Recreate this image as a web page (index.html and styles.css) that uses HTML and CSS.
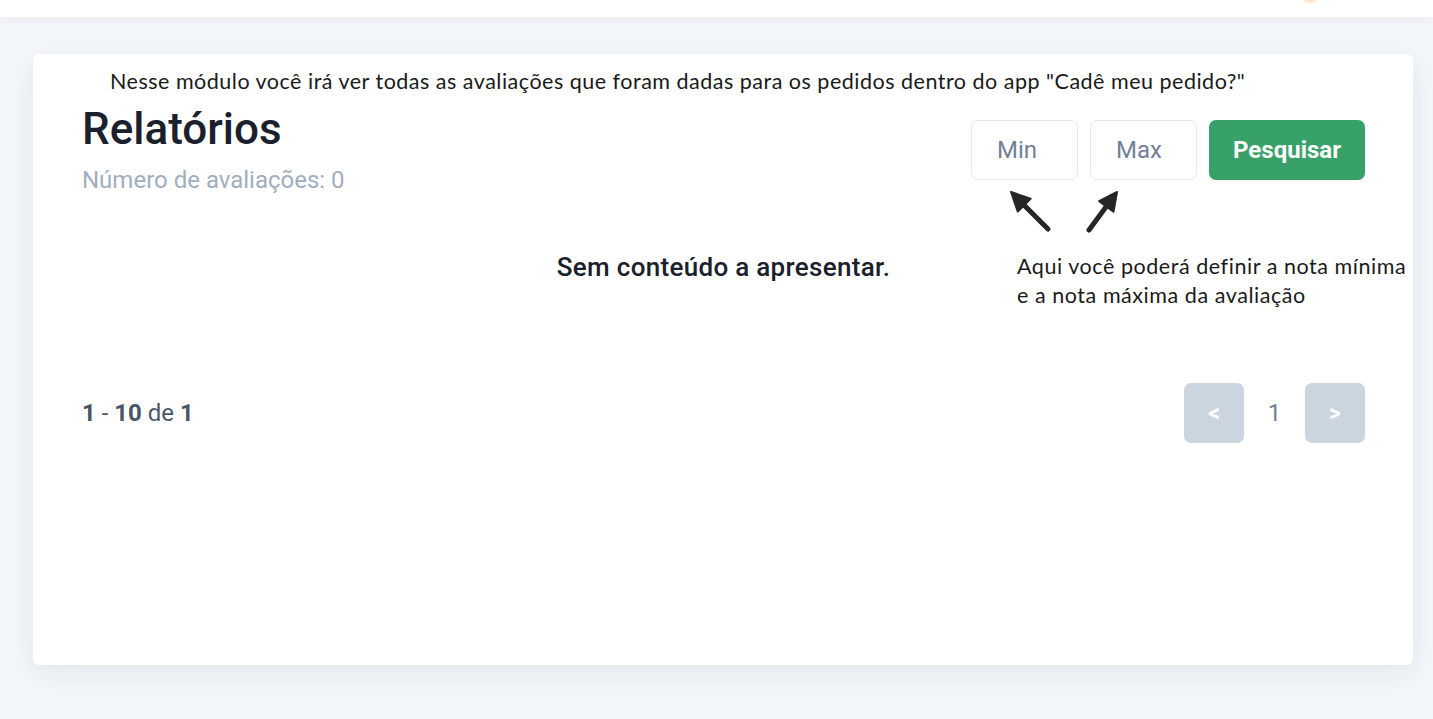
FILE: index.html
```html
<!DOCTYPE html>
<html lang="pt-BR">
<head>
<meta charset="utf-8">
<title>Relatórios</title>
<link rel="stylesheet" href="styles.css">
</head>
<body>
<header class="topbar">
  <span class="avatar-dot"></span>
</header>
<main class="page">
  <section class="card">
    <p class="note">Nesse módulo você irá ver todas as avaliações que foram dadas para os pedidos dentro do app "Cadê meu pedido?"</p>
    <div class="head">
      <div class="head-text">
        <h1 class="title">Relatórios</h1>
        <p class="count">Número de avaliações: 0</p>
      </div>
      <form class="filters">
        <input class="field" type="text" placeholder="Min">
        <input class="field" type="text" placeholder="Max">
        <button class="search" type="button">Pesquisar</button>
        <svg class="arrows" width="130" height="55" viewBox="0 0 130 55" aria-hidden="true">
          <line x1="49" y1="44" x2="24.7" y2="19.7" stroke="#262626" stroke-width="5" stroke-linecap="round"/>
          <polygon points="12,7 31.6,13.8 18.8,26.6" fill="#262626" stroke="#262626" stroke-width="2" stroke-linejoin="round"/>
          <line x1="90" y1="45" x2="107.3" y2="21.5" stroke="#262626" stroke-width="5" stroke-linecap="round"/>
          <polygon points="118,7 114.5,26.8 100.1,16.2" fill="#262626" stroke="#262626" stroke-width="2" stroke-linejoin="round"/>
        </svg>
        <p class="hint">Aqui você poderá definir a nota mínima<br>e a nota máxima da avaliação</p>
      </form>
    </div>
    <p class="empty">Sem conteúdo a apresentar.</p>
    <div class="pager">
      <p class="range"><b>1</b> - <b>10</b> de <b>1</b></p>
      <div class="pages">
        <button class="page-btn" type="button">&lt;</button>
        <span class="page-num">1</span>
        <button class="page-btn" type="button">&gt;</button>
      </div>
    </div>
  </section>
</main>
</body>
</html>
```

FILE: styles.css
```css
* { box-sizing: border-box; }

html, body {
  margin: 0;
  padding: 0;
  height: 100%;
}

body {
  background: #f4f7fa;
  font-family: Roboto, "Liberation Sans", sans-serif;
  overflow: hidden;
}

.topbar {
  position: relative;
  height: 17px;
  background: #ffffff;
  box-shadow: 0 2px 14px rgba(160, 174, 192, 0.18);
  overflow: hidden;
}

.avatar-dot {
  position: absolute;
  left: 1302px;
  top: -14px;
  width: 17px;
  height: 17px;
  border-radius: 50%;
  background: #fbd38d;
  filter: blur(1px);
  opacity: 0.6;
}

.page {
  padding: 37px 20px 0 33px;
}

.card {
  height: 611px;
  background: #ffffff;
  border-radius: 6px;
  box-shadow: 0 8px 30px rgba(160, 174, 192, 0.22);
  padding: 13px 48px 0 49px;
}

.note {
  margin: 0 0 0 28px;
  font-family: Lato, "Open Sans", sans-serif;
  font-size: 21.5px;
  letter-spacing: 0.5px;
  line-height: 28px;
  color: #1a1a1a;
  white-space: nowrap;
}

.head {
  display: flex;
  justify-content: space-between;
  align-items: flex-start;
  margin-top: 8px;
}

.title {
  margin: 0;
  font-size: 44px;
  line-height: 52px;
  font-weight: 500;
  color: #1a202c;
}

.count {
  margin: 11px 0 0;
  font-size: 24px;
  line-height: 28px;
  color: #a0aec0;
}

.filters {
  position: relative;
  display: flex;
  gap: 12px;
  margin-top: 17px;
}

.field {
  width: 107px;
  height: 60px;
  border: 1px solid #e2e8f0;
  border-radius: 7px;
  padding: 0 25px;
  font-family: Roboto, "Liberation Sans", sans-serif;
  font-size: 24px;
  color: #4a5568;
  background: #fff;
  outline: none;
}

.field::placeholder {
  color: #718096;
}

.search {
  width: 156px;
  height: 60px;
  border: 0;
  border-radius: 7px;
  background: #38a169;
  color: #ffffff;
  font-family: Roboto, "Liberation Sans", sans-serif;
  font-size: 24px;
  font-weight: 700;
}

.arrows {
  position: absolute;
  left: 28px;
  top: 65px;
}

.hint {
  position: absolute;
  left: 46px;
  top: 132px;
  margin: 0;
  white-space: nowrap;
  font-family: Lato, "Open Sans", sans-serif;
  font-size: 21.5px;
  letter-spacing: 0.55px;
  line-height: 29px;
  color: #1a1a1a;
}

.empty {
  margin: 57px 0 0;
  text-align: center;
  font-size: 26px;
  letter-spacing: 0.3px;
  line-height: 32px;
  font-weight: 500;
  color: #1a202c;
}

.pager {
  display: flex;
  justify-content: space-between;
  align-items: center;
  margin-top: 100px;
}

.range {
  margin: 0;
  font-size: 24px;
  color: #4a5568;
}

.range b {
  font-weight: 700;
}

.pages {
  display: flex;
  align-items: center;
}

.page-btn {
  width: 60px;
  height: 60px;
  border: 0;
  border-radius: 7px;
  background: #cbd5e0;
  color: #ffffff;
  font-family: Roboto, "Liberation Sans", sans-serif;
  font-size: 23px;
  font-weight: 700;
}

.page-num {
  width: 61px;
  text-align: center;
  font-size: 24px;
  color: #718096;
}
```
